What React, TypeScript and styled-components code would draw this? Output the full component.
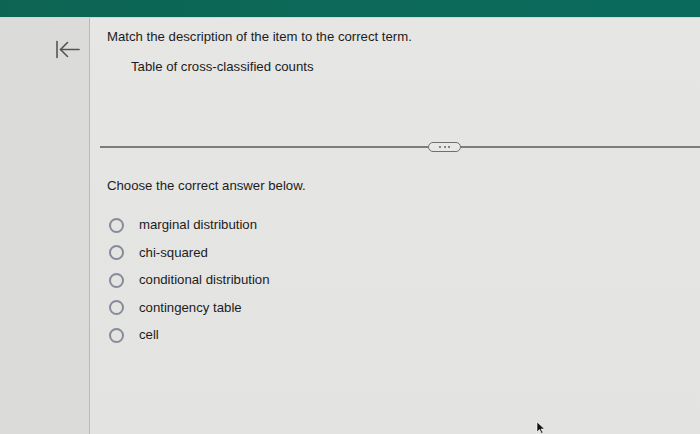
import React from 'react'
import styled, { createGlobalStyle } from 'styled-components'

const GlobalStyle = createGlobalStyle`
  html, body {
    margin: 0;
    padding: 0;
    width: 700px;
    height: 434px;
    overflow: hidden;
    background: #e2e2e0;
  }
  body {
    font-family: 'Liberation Sans', Arial, sans-serif;
    color: #1c1c1c;
  }
`

const Page = styled.div`
  position: relative;
  width: 700px;
  height: 434px;
  display: flex;
  flex-direction: column;
`

const TopBar = styled.div`
  height: 17px;
  flex: none;
  background: linear-gradient(90deg, #0d6453 0%, #0c6a5a 60%, #0a6a5c 100%);
  border-bottom: 1px solid #c9d9d6;
`

const Body = styled.div`
  flex: 1;
  display: flex;
`

const Sidebar = styled.div`
  width: 90px;
  flex: none;
  background: #dbdbd9;
  border-right: 1.5px solid #b9b9b7;
  display: flex;
  align-items: flex-start;
  padding: 22px 0 0 55px;
  box-sizing: border-box;
`

const BackButton = styled.button`
  background: none;
  border: none;
  padding: 0;
  width: 26px;
  height: 19px;
  cursor: pointer;
`

const Main = styled.div`
  flex: 1;
  background: linear-gradient(180deg, #e6e6e4 0%, #e3e3e1 100%);
  display: flex;
  flex-direction: column;
`

const Question = styled.div`
  padding: 11px 0 0 17px;
`

const Prompt = styled.div`
  font-size: 13.2px;
  line-height: 16px;
`

const Item = styled.div`
  font-size: 13.2px;
  line-height: 16px;
  margin: 14px 0 0 24px;
`

const DividerRow = styled.div`
  margin: 67px 0 0 10px;
  display: flex;
  align-items: center;
`

const Line = styled.div<{ $width?: number }>`
  flex: ${p => (p.$width ? `0 0 ${p.$width}px` : '1')};
  height: 1.5px;
  background: #7c7c7c;
`

const MorePill = styled.div`
  width: 31px;
  height: 8px;
  border: 1.3px solid #6f6f6f;
  border-radius: 5px;
  display: flex;
  align-items: center;
  justify-content: center;
  gap: 2.5px;
  background: #e8e8e6;
`

const Dot = styled.span`
  width: 2px;
  height: 2px;
  border-radius: 50%;
  background: #666;
`

const Answers = styled.div`
  padding: 26px 0 0 17px;
`

const Options = styled.div`
  margin-top: 23px;
  display: flex;
  flex-direction: column;
  gap: 11.5px;
`

const Option = styled.label`
  display: flex;
  align-items: center;
  font-size: 13.2px;
  line-height: 16px;
  cursor: pointer;
`

const Radio = styled.span`
  width: 11px;
  height: 11px;
  border: 2px solid #868b99;
  border-radius: 50%;
  margin-left: 2px;
  margin-right: 15px;
  flex: none;
`

const Pointer = styled.svg`
  position: absolute;
  left: 536px;
  top: 421px;
`

const options = [
  'marginal distribution',
  'chi-squared',
  'conditional distribution',
  'contingency table',
  'cell'
]

export default function App () {
  return (
    <>
      <GlobalStyle />
      <Page>
        <TopBar />
        <Body>
          <Sidebar>
            <BackButton aria-label='Back'>
              <svg width='26' height='19' viewBox='0 0 26 19'>
                <g stroke='#555' strokeWidth='1.6' fill='none' strokeLinecap='round' strokeLinejoin='round'>
                  <path d='M2 1.5 V17.5' />
                  <path d='M5.5 9.5 H24' />
                  <path d='M12.5 2.5 L5.5 9.5 L12.5 16.5' />
                </g>
              </svg>
            </BackButton>
          </Sidebar>
          <Main>
            <Question>
              <Prompt>Match the description of the item to the correct term.</Prompt>
              <Item>Table of cross-classified counts</Item>
            </Question>
            <DividerRow>
              <Line $width={328} />
              <MorePill>
                <Dot /><Dot /><Dot />
              </MorePill>
              <Line />
            </DividerRow>
            <Answers>
              <Prompt>Choose the correct answer below.</Prompt>
              <Options>
                {options.map(o => (
                  <Option key={o}>
                    <Radio />
                    {o}
                  </Option>
                ))}
              </Options>
            </Answers>
          </Main>
        </Body>
        <Pointer width='10' height='13' viewBox='0 0 10 13'>
          <path d='M1 1 L1 11 L3.5 8.5 L5.5 12.5 L7 11.8 L5 8 L8.5 8 Z' fill='#111' stroke='#fff' strokeWidth='0.6' />
        </Pointer>
      </Page>
    </>
  )
}
